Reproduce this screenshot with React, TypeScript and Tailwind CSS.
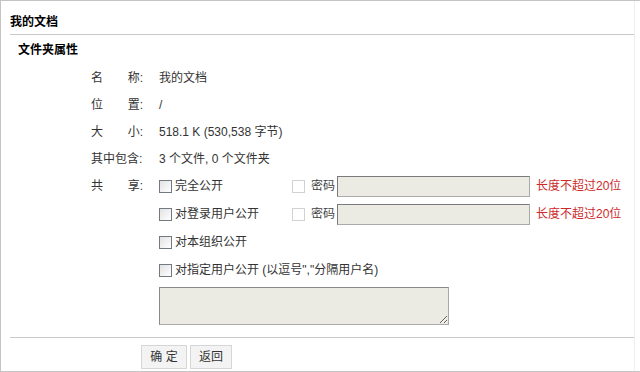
import React from "react";

const font = { fontFamily: '"Liberation Sans", "Noto Sans CJK SC", sans-serif' };

const Box = ({ disabled = false }: { disabled?: boolean }) => (
  <span
    className={
      disabled
        ? "inline-block w-[13px] h-[13px] border border-[#d2d2d2] bg-white shrink-0"
        : "inline-block w-[13px] h-[13px] border border-[#707a80] bg-gradient-to-br from-[#e2e2e2] to-white shrink-0"
    }
  />
);

const Label = ({ a, b }: { a: string; b: string }) => (
  <div className="w-[52px] flex justify-between shrink-0">
    <span>{a}</span>
    <span>{b}</span>
  </div>
);

const InfoRow = ({ label, children }: { label: React.ReactNode; children: React.ReactNode }) => (
  <div className="h-[27px] flex items-center pl-[81px]">
    {label}
    <div className="ml-[16px] flex items-center">{children}</div>
  </div>
);

const PasswordPart = () => (
  <div className="flex items-center">
    <Box disabled />
    <span className="ml-[6px] text-[#444]">密码</span>
    <div className="ml-[2px] w-[193px] h-[21px] bg-[#ebebe4] border border-[#a9a9a9] border-t-[#7a7a7a] border-l-[#7a7a7a]" />
    <span className="ml-[6px] text-[#cc2a2a]">长度不超过20位</span>
  </div>
);

const ShareOption = ({ text, wide = false }: { text: string; wide?: boolean }) => (
  <div className={wide ? "flex items-center" : "flex items-center w-[133px]"}>
    <Box />
    <span className="ml-[3px]">{text}</span>
  </div>
);

export default function App() {
  return (
    <div
      className="w-[640px] h-[372px] bg-white border-t border-l border-b border-[#c4c4c4] text-[12px] text-[#333] flex"
      style={font}
    >
      <div className="w-[634px] h-full border-r border-[#eeeeee] pl-[9px]">
        <div className="h-[34px] pt-[9px] flex items-center border-b border-[#c8c8c8] font-bold text-black">
          我的文档
        </div>
        <div className="h-[29px] flex items-center pl-[8px] font-bold text-black">文件夹属性</div>

        <InfoRow label={<Label a="名" b="称:" />}>我的文档</InfoRow>
        <InfoRow label={<Label a="位" b="置:" />}>/</InfoRow>
        <InfoRow label={<Label a="大" b="小:" />}>518.1 K (530,538 字节)</InfoRow>
        <InfoRow label={<Label a="其中包含:" b="" />}>3 个文件, 0 个文件夹</InfoRow>

        <div className="h-[28px] flex items-center pl-[81px]">
          <Label a="共" b="享:" />
          <div className="ml-[16px] flex items-center">
            <ShareOption text="完全公开" />
            <PasswordPart />
          </div>
        </div>
        <div className="h-[28px] flex items-center pl-[149px]">
          <ShareOption text="对登录用户公开" />
          <PasswordPart />
        </div>
        <div className="h-[28px] flex items-center pl-[149px]">
          <ShareOption text="对本组织公开" wide />
        </div>
        <div className="h-[28px] flex items-center pl-[149px]">
          <ShareOption text={'对指定用户公开 (以逗号","分隔用户名)'} wide />
        </div>

        <div className="pl-[149px] mt-[3px]">
          <textarea
            readOnly
            className="block w-[290px] h-[38px] bg-[#ebebe4] border border-[#a9a9a9] border-t-[#8a8a8a] border-l-[#8a8a8a] outline-none"
          />
        </div>

        <div className="mt-[12px] border-t border-[#c8c8c8] pt-[7px] pl-[131px] flex gap-[3px]">
          <button className="w-[46px] h-[24px] bg-[#f3f3f3] border border-[#d6d6d6] text-[#333]">确 定</button>
          <button className="w-[42px] h-[24px] bg-[#f3f3f3] border border-[#d6d6d6] text-[#333]">返回</button>
        </div>
      </div>
    </div>
  );
}
